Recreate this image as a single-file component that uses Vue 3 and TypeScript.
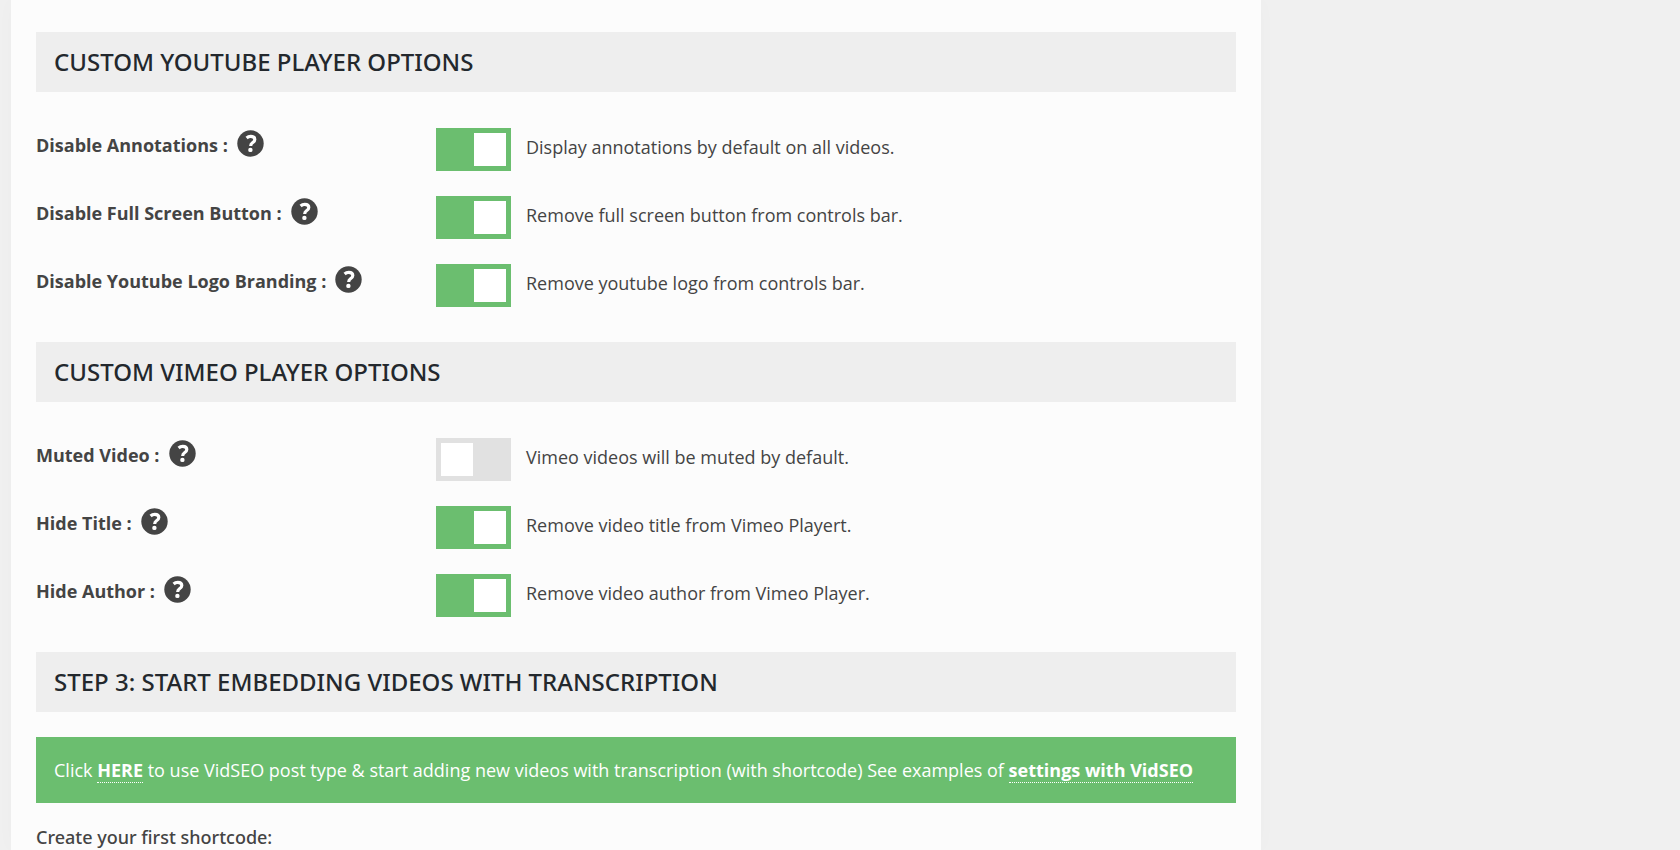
<script setup lang="ts">
import { reactive } from 'vue'

interface Option {
  id: string
  label: string
  text: string
  on: boolean
}
interface Section {
  title: string
  options: Option[]
}

const sections = reactive<Section[]>([
  {
    title: 'Custom Youtube Player Options',
    options: [
      { id: 'annotations', label: 'Disable Annotations :', text: 'Display annotations by default on all videos.', on: true },
      { id: 'fullscreen', label: 'Disable Full Screen Button :', text: 'Remove full screen button from controls bar.', on: true },
      { id: 'branding', label: 'Disable Youtube Logo Branding :', text: 'Remove youtube logo from controls bar.', on: true },
    ],
  },
  {
    title: 'Custom Vimeo Player Options',
    options: [
      { id: 'muted', label: 'Muted Video :', text: 'Vimeo videos will be muted by default.', on: false },
      { id: 'title', label: 'Hide Title :', text: 'Remove video title from Vimeo Playert.', on: true },
      { id: 'author', label: 'Hide Author :', text: 'Remove video author from Vimeo Player.', on: true },
    ],
  },
])
</script>

<template>
  <main class="panel">
    <section v-for="section in sections" :key="section.title" class="section">
      <h2 class="heading">{{ section.title }}</h2>
      <div class="options">
        <div v-for="option in section.options" :key="option.id" class="option">
          <div class="name">
            <label :for="option.id">{{ option.label }}</label>
            <button type="button" class="help" aria-label="Help">
              <svg viewBox="0 0 27 27" aria-hidden="true">
                <circle cx="13.5" cy="13.5" r="13.2" fill="#444" />
                <path d="M9.6 8C10.8 6.9 12.2 6.4 13.8 6.4c2.5 0 4 1.2 4 3.1 0 1.6-1 2.4-2.3 3.3-1.3.9-1.8 1.5-1.8 3.1" fill="none" stroke="#fff" stroke-width="3.2" />
                <circle cx="13.4" cy="19.9" r="2.2" fill="#fff" />
              </svg>
            </button>
          </div>
          <input :id="option.id" v-model="option.on" type="checkbox" class="toggle" />
          <span class="text">{{ option.text }}</span>
        </div>
      </div>
    </section>

    <section>
      <h2 class="heading">Step 3: Start embedding videos with transcription</h2>
      <p class="notice">
        Click <a href="#here">HERE</a> to use VidSEO post type &amp; start adding new videos with transcription (with shortcode) See examples of <a href="#settings">settings with VidSEO</a>
      </p>
      <p class="create">Create your first shortcode:</p>
    </section>
  </main>
</template>

<style>
body {
  background: #f0f0f0;
}
</style>

<style scoped>
.panel {
  box-sizing: border-box;
  min-height: 100vh;
  margin: 0 419px 0 11px;
  padding: 32px 25px 0;
  background: #fcfcfc;
  box-shadow: 0 0 20px rgba(0, 0, 0, 0.02);
  color: #444;
  font: 18px/24px "Open Sans", "Noto Sans", sans-serif;
}
.section {
  margin-bottom: 35px;
}
.heading {
  margin: 0;
  padding: 0 18px;
  background: #eee;
  color: #23282d;
  font-family: "Noto Sans", "Open Sans", sans-serif;
  font-size: 24px;
  font-weight: 500;
  line-height: 60px;
  text-transform: uppercase;
}
.options {
  display: grid;
  gap: 25px;
  padding-top: 36px;
}
.option {
  display: grid;
  grid-template-columns: 400px 75px 1fr;
  height: 43px;
}
.name {
  display: flex;
  align-items: flex-start;
  gap: 9px;
  font-weight: 700;
}
.name label {
  padding-top: 5px;
}
.help {
  width: 27px;
  height: 27px;
  margin-top: 2px;
  padding: 0;
  border: 0;
  background: none;
  cursor: pointer;
}
.help svg {
  display: block;
}
.toggle {
  appearance: none;
  box-sizing: border-box;
  display: flex;
  width: 75px;
  height: 43px;
  margin: 0;
  padding: 5px;
  background: #e1e1e1;
  cursor: pointer;
}
.toggle::before {
  content: "";
  width: 32px;
  background: #fff;
}
.toggle:checked {
  justify-content: flex-end;
  background: #6bbe6f;
}
.text {
  padding: 7px 0 0 15px;
}
.notice {
  margin: 25px 0 0;
  padding: 21px 18px;
  background: #6bbe6f;
  color: #fff;
}
.notice a {
  border-bottom: 1px dotted #fff;
  color: #fff;
  font-weight: 700;
  text-decoration: none;
}
.create {
  margin: 22px 0 0;
  font-family: "Noto Sans", "Open Sans", sans-serif;
  font-weight: 500;
}
</style>
